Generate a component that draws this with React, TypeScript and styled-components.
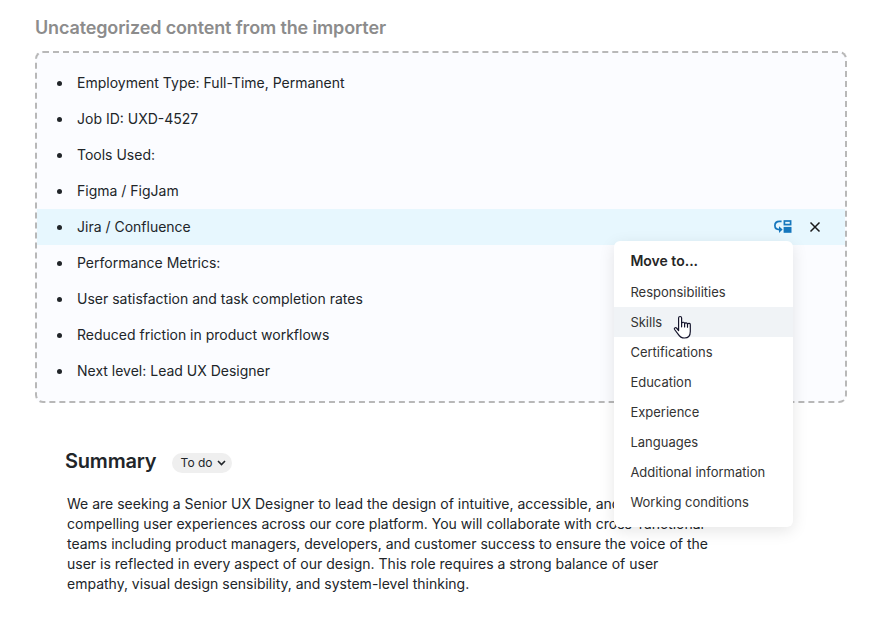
import React from 'react';
import styled, { createGlobalStyle } from 'styled-components';

const Global = createGlobalStyle`
  * { box-sizing: border-box; }
  body { margin: 0; background: #fff; font-family: Inter, sans-serif; color: #212529; }
`;
const Page = styled.main`
  height: 619px;
  padding: 15px 35px 0;
  overflow: hidden;
`;
const Heading = styled.h2`
  margin: 0 0 11px;
  font-size: 18px;
  line-height: 25px;
  font-weight: 600;
  letter-spacing: -0.14px;
  color: #8c8c8c;
`;
const Box = styled.section`
  position: relative;
  width: 812px;
  height: 352px;
  background: #fbfcff;
  border: 2px dashed #b8b8b8;
  border-radius: 8px;
  padding: 12px 0;
`;
const List = styled.ul`
  margin: 0;
  padding: 0;
  list-style: none;
`;
const Item = styled.li<{ $active?: boolean }>`
  position: relative;
  display: flex;
  align-items: center;
  height: 36px;
  padding: 0 24px 0 40px;
  font-size: 14px;
  background: ${p => (p.$active ? '#e7f7fe' : 'transparent')};
  &::before {
    content: '';
    position: absolute;
    left: 20px;
    top: 16px;
    width: 5px;
    height: 5px;
    border-radius: 50%;
    background: #212529;
  }
`;
const ItemText = styled.span`
  line-height: 20px;
`;
const Actions = styled.div`
  margin-left: auto;
  display: flex;
  align-items: center;
  gap: 17px;
`;
const Menu = styled.div`
  position: absolute;
  left: 577px;
  top: 188px;
  width: 179px;
  height: 286px;
  padding-top: 5px;
  background: #fff;
  color: #333;
  border-radius: 6px;
  box-shadow: 0 4px 16px rgba(0, 0, 0, 0.1);
`;
const MenuTitle = styled.div`
  padding: 0 16.4px;
  height: 31px;
  font-size: 14px;
  font-weight: 600;
  line-height: 30px;
  color: #262626;
`;
const MenuItem = styled.div<{ $active?: boolean }>`
  padding: 0 16.4px;
  height: 30px;
  font-size: 13px;
  line-height: 31px;
  background: ${p => (p.$active ? '#f0f3f6' : 'transparent')};
`;
const Pointer = styled.svg`
  position: absolute;
  left: 59px;
  top: 74px;
`;
const SummaryHead = styled.div`
  display: flex;
  align-items: center;
  gap: 16px;
  margin: 45px 0 0 30px;
`;
const Title = styled.h3`
  margin: 0;
  width: 91px;
  font-size: 20px;
  line-height: 26px;
  font-weight: 600;
  letter-spacing: -0.2px;
`;
const Pill = styled.button`
  display: flex;
  align-items: center;
  gap: 4px;
  width: 60px;
  height: 20px;
  margin-top: 4px;
  padding: 0 0 1px 8.6px;
  border: 0;
  border-radius: 10px;
  background: #efefef;
  color: #212529;
  font: 12px Inter, sans-serif;
  svg { margin-top: 1px; }
`;
const Paragraph = styled.p`
  margin: 20px 0 0 32px;
  font-size: 14px;
  line-height: 20px;
  white-space: nowrap;
`;

const items = ['Employment Type: Full-Time, Permanent', 'Job ID: UXD-4527', 'Tools Used:', 'Figma / FigJam', 'Jira / Confluence', 'Performance Metrics:', 'User satisfaction and task completion rates', 'Reduced friction in product workflows', 'Next level: Lead UX Designer'];
const targets = ['Responsibilities', 'Skills', 'Certifications', 'Education', 'Experience', 'Languages', 'Additional information', 'Working conditions'];

const MoveIcon = () => (
  <svg width="18" height="14" viewBox="0 0 18 14" fill="none" stroke="#1677bd" strokeWidth="1.7">
    <path d="M7.6 1.4H5.4C2.6 1.4 .9 3.3 .9 5.6c0 2.5 1.8 4 4.5 4H6.6" />
    <path d="M5 6.2L8.6 9.6L5 13z" fill="#1677bd" stroke="none" />
    <rect x="10.4" y="1" width="6.2" height="3.6" />
    <rect x="9.6" y="6.9" width="7.9" height="5.9" fill="#1677bd" stroke="none" />
  </svg>
);

const CloseIcon = () => (
  <svg width="12" height="12" viewBox="0 0 12 12" stroke="#1a1a1a" strokeWidth="1.5">
    <path d="M1.5 1.5l9 9M10.5 1.5l-9 9" />
  </svg>
);

const HandPointer = () => (
  <Pointer width="19" height="25" viewBox="0 0 19 25" fill="#fff" stroke="#14142b" strokeWidth="1.2" strokeLinejoin="round" strokeLinecap="round">
    <path d="M5.6 15.5V3a1.5 1.5 0 0 1 3 0v5.6a1.5 1.5 0 0 1 3 .3 1.5 1.5 0 0 1 2.9.5 1.4 1.4 0 0 1 2.8.7v6.4c0 4-2.3 6.5-5.8 6.5-3.3 0-4.9-1.4-6.4-3.9l-3.5-4.6c-.9-1.3.8-2.6 1.9-1.5z" />
    <path d="M8.6 8.6v3.2M11.6 9v3M14.5 9.6v2.6" />
  </Pointer>
);

export default function App() {
  return (
    <Page>
      <Global />
      <Heading>Uncategorized content from the importer</Heading>
      <Box>
        <List>
          {items.map((t, i) => (
            <Item key={t} $active={i === 4}>
              <ItemText>{t}</ItemText>
              {i === 4 && (
                <Actions>
                  <MoveIcon />
                  <CloseIcon />
                </Actions>
              )}
            </Item>
          ))}
        </List>
        <Menu>
          <MenuTitle>Move to...</MenuTitle>
          {targets.map((t, i) => <MenuItem key={t} $active={i === 1}>{t}</MenuItem>)}
          <HandPointer />
        </Menu>
      </Box>
      <SummaryHead>
        <Title>Summary</Title>
        <Pill>
          To do
          <svg width="9" height="6" viewBox="0 0 9 6" fill="none" stroke="#212529" strokeWidth="1.6"><path d="M1 1l3.5 3.5L8 1" /></svg>
        </Pill>
      </SummaryHead>
      <Paragraph>
        We are seeking a Senior UX Designer to lead the design of intuitive, accessible, and<br />
        compelling user experiences across our core platform. You will collaborate with cross-functional<br />
        teams including product managers, developers, and customer success to ensure the voice of the<br />
        user is reflected in every aspect of our design. This role requires a strong balance of user<br />
        empathy, visual design sensibility, and system-level thinking.
      </Paragraph>
    </Page>
  );
}
